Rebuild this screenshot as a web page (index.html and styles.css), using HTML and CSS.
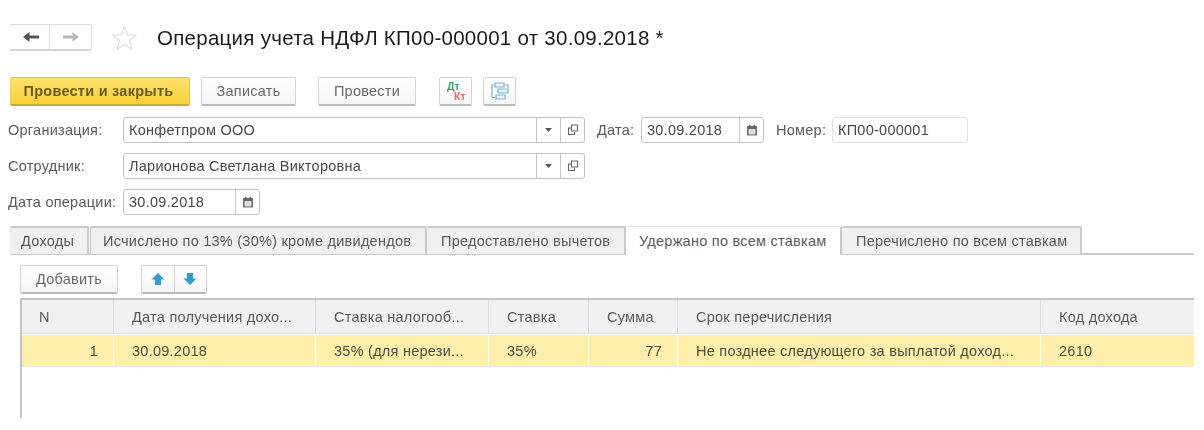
FILE: index.html
```html
<!DOCTYPE html>
<html lang="ru">
<head>
<meta charset="utf-8">
<title>Операция учета НДФЛ</title>
<link rel="stylesheet" href="styles.css">
</head>
<body>
<div class="page">
  <header class="head">
    <div class="nav">
      <span class="nav-cell nav-back"><svg width="18" height="12" viewBox="0 0 18 12"><path d="M1 6 7.500 1V4.600H17V7.400H7.500V11z" fill="#555"/></svg></span>
      <span class="nav-cell nav-fwd"><svg width="18" height="12" viewBox="0 0 18 12"><path d="M17 6 10.500 1V4.600H1V7.400h9.500V11z" fill="#b8b8b8"/></svg></span>
    </div>
    <svg class="star" width="27" height="26" viewBox="0 0 27 26"><path d="M13.500 1.500 16.700 10H25.500L18.500 15.500 21 24.500 13.500 19.300 6 24.500 8.500 15.500 1.500 10H10.300z" fill="#fff" stroke="#dedede" stroke-width="1.100" stroke-linejoin="round"/></svg>
    <h1 class="title">Операция учета НДФЛ КП00-000001 от 30.09.2018 *</h1>
  </header>

  <div class="toolbar">
    <button class="btn btn-primary">Провести и закрыть</button>
    <button class="btn btn-write">Записать</button>
    <button class="btn btn-post">Провести</button>
    <button class="btn btn-icon btn-dtkt"><span class="dt">Дт</span><span class="kt">Кт</span></button>
    <button class="btn btn-icon btn-struct"><svg width="18" height="18" viewBox="0 0 18 18" fill="none" stroke="#7fb0d6" stroke-width="1.200"><path d="M4 1h9v4H4zM7 7h10v4H7zM5 13h9v4H5z" fill="#e8f2fa"/><path d="M3 3H1v12.500h3M13.500 3H17v3"/></svg></button>
  </div>

  <div class="form-row">
    <label class="lbl">Организация:</label>
    <div class="field field-ref"><span class="val">Конфетпром ООО</span><span class="cell"><svg width="7" height="4" viewBox="0 0 7 4"><path d="M0 0h7L3.500 4z" fill="#555"/></svg></span><span class="cell"><svg width="12" height="12" viewBox="0 0 12 12" fill="none" stroke="#666" stroke-width="1.100"><path d="M4.500 1h6v6h-6z"/><path d="M4 4H1.500v6.500h6V8"/></svg></span></div>
    <label class="lbl-date">Дата:</label>
    <div class="field field-date"><span class="val">30.09.2018</span><span class="cell cell-cal"><svg width="12" height="12" viewBox="0 0 12 12"><path d="M1 2h10v9.500H1z" fill="#666"/><path d="M2.500 5h7v5.500h-7z" fill="#ddd"/><path d="M3 .8h1.500v2.500H3zM7.500 .8H9v2.500H7.500z" fill="#666"/></svg></span></div>
    <label class="lbl-num">Номер:</label>
    <div class="field field-num"><span class="val">КП00-000001</span></div>
  </div>

  <div class="form-row">
    <label class="lbl">Сотрудник:</label>
    <div class="field field-ref"><span class="val">Ларионова Светлана Викторовна</span><span class="cell"><svg width="7" height="4" viewBox="0 0 7 4"><path d="M0 0h7L3.500 4z" fill="#555"/></svg></span><span class="cell"><svg width="12" height="12" viewBox="0 0 12 12" fill="none" stroke="#666" stroke-width="1.100"><path d="M4.500 1h6v6h-6z"/><path d="M4 4H1.500v6.500h6V8"/></svg></span></div>
  </div>

  <div class="form-row">
    <label class="lbl">Дата операции:</label>
    <div class="field field-opdate"><span class="val">30.09.2018</span><span class="cell cell-cal"><svg width="12" height="12" viewBox="0 0 12 12"><path d="M1 2h10v9.500H1z" fill="#666"/><path d="M2.500 5h7v5.500h-7z" fill="#ddd"/><path d="M3 .8h1.500v2.500H3zM7.500 .8H9v2.500H7.500z" fill="#666"/></svg></span></div>
  </div>

  <nav class="tabs">
    <span class="tab tab-1">Доходы</span>
    <span class="tab tab-2">Исчислено по 13% (30%) кроме дивидендов</span>
    <span class="tab tab-3">Предоставлено вычетов</span>
    <span class="tab tab-4 tab-active">Удержано по всем ставкам</span>
    <span class="tab tab-5">Перечислено по всем ставкам</span>
  </nav>

  <div class="table-bar">
    <button class="btn btn-add">Добавить</button>
    <div class="updown">
      <span class="ud-cell"><svg width="14" height="14" viewBox="0 0 14 14"><path d="M7 1 13.500 7.500H10V13H4V7.500H.5z" fill="#2f9ad6"/></svg></span>
      <span class="ud-cell"><svg width="14" height="14" viewBox="0 0 14 14"><path d="M7 13 13.500 6.500H10V1H4v5.500H.5z" fill="#2f9ad6"/></svg></span>
    </div>
  </div>

  <div class="grid">
    <div class="row row-head">
      <span class="c c-n">N</span>
      <span class="c">Дата получения дохо...</span>
      <span class="c">Ставка налогооб...</span>
      <span class="c">Ставка</span>
      <span class="c">Сумма</span>
      <span class="c">Срок перечисления</span>
      <span class="c">Код дохода</span>
    </div>
    <div class="row row-data">
      <span class="c c-right">1</span>
      <span class="c">30.09.2018</span>
      <span class="c">35% (для нерези...</span>
      <span class="c">35%</span>
      <span class="c c-right">77</span>
      <span class="c">Не позднее следующего за выплатой доход...</span>
      <span class="c">2610</span>
    </div>
  </div>
</div>
</body>
</html>
```
FILE: styles.css
```css
* { box-sizing: border-box; }
html, body { margin: 0; background: #fff; }
body {
  font-family: "Liberation Sans", Arial, sans-serif;
  font-size: 14.500px;
  letter-spacing: .25px;
  color: #5a5a5a;
  width: 1204px;
  height: 430px;
  overflow: hidden;
}
.page { padding: 24px 10px 0 8px; filter: blur(0.45px); }

.head { display: flex; align-items: center; height: 27px; margin-left: 2px; }
.nav {
  display: flex; width: 82px; height: 27px;
  border: 1px solid #dcdcdc; border-left: 0; border-radius: 0 3px 3px 0;
  border-bottom: 2px solid #d4d4d4;
}
.nav-cell { display: flex; align-items: center; justify-content: center; }
.nav-back { width: 40px; padding-left: 2px; border-right: 1px solid #e0e0e0; }
.nav-fwd { flex: 1; }
.star { margin-left: 19px; flex: none; }
.title {
  margin: 0 0 0 19px;
  font-size: 20.500px; font-weight: 400; letter-spacing: .27px; color: #1a1a1a;
  white-space: nowrap;
}

.btn {
  font: inherit; letter-spacing: inherit; color: #6a6a6a; background: linear-gradient(#fff, #f6f6f6);
  border: 1px solid #d4d4d4; border-bottom: 2px solid #bbb; border-radius: 2px;
  height: 29px; padding: 0; display: flex; align-items: center; justify-content: center;
}
.toolbar { display: flex; margin: 26px 0 0 2px; height: 29px; }
.btn-primary {
  width: 180px; font-weight: 700; color: #6a5c1e; padding-right: 2px;
  background: linear-gradient(#fde26c, #fbcf3a);
  border: 1px solid #e9c043; border-left: 0; border-bottom: 2px solid #cfa935;
}
.btn-write { width: 95px; margin-left: 11px; }
.btn-post { width: 98px; margin-left: 22px; }
.btn-icon { width: 33px; }
.btn-dtkt {
  margin-left: 23px; flex-direction: column; align-items: flex-start;
  font-weight: 700; font-size: 10.500px; line-height: 10px; letter-spacing: 0; padding-left: 7px;
}
.dt { color: #3fa565; }
.kt { color: #f06666; margin-left: 7px; }
.btn-struct { margin-left: 11px; }

.form-row { display: flex; align-items: center; height: 26px; margin-top: 10px; }
.toolbar + .form-row { margin-top: 11px; }
.lbl { width: 115px; white-space: nowrap; flex: none; }
.field {
  display: flex; align-items: stretch; height: 26px;
  border: 1px solid #c2c2c2; border-radius: 3px; background: #fff; color: #484848;
}
.val { flex: 1; padding-left: 5px; line-height: 24px; white-space: nowrap; overflow: hidden; }
.cell { width: 24px; display: flex; align-items: center; justify-content: center; border-left: 1px solid #c9c9c9; }
.field-ref { width: 462px; }
.field-date { width: 123px; }
.field-opdate { width: 137px; }
.field-num { width: 136px; border-color: #e0e0e0; }
.lbl-date { margin-left: 12px; width: 44px; }
.lbl-num { margin-left: 12px; width: 56px; }

.tabs { display: flex; height: 30px; margin: 10px 0 0 2px; padding-top: 1px; border-bottom: 2px solid #c8c8c8; }
.tab {
  height: 28px; display: flex; align-items: center; background: #f0f0f0;
  border: 2px solid #cacaca; border-bottom: 0; border-left: 0; border-radius: 2px 2px 0 0;
  white-space: nowrap;
}
.tab-1 { width: 79px; padding-left: 11px; }
.tab-2 { width: 337px; padding-left: 12px; margin-left: 1px; border-left: 1px solid #cacaca; }
.tab-3 { width: 199px; padding-left: 14px; }
.tab-4 { width: 216px; padding-left: 13px; }
.tab-5 { width: 240px; padding-left: 14px; }
.tab-active { background: #fff; height: 29px; border-top: 1px solid #e8e8e8; border-right: 2px solid #c8c8c8; position: relative; z-index: 1; }

.table-bar { display: flex; margin: 10px 0 0 12px; height: 29px; }
.btn-add { width: 98px; height: 29px; }
.updown {
  display: flex; width: 66px; height: 29px; margin-left: 23px;
  border: 1px solid #d4d4d4; border-bottom: 2px solid #bbb; border-radius: 2px;
  background: linear-gradient(#fff, #f6f6f6);
}
.ud-cell { flex: 1; display: flex; align-items: center; justify-content: center; }
.ud-cell + .ud-cell { border-left: 1px solid #d4d4d4; }

.grid {
  margin: 4px 0 0 12px; width: 1174px; height: 120px;
  border-top: 2px solid #c4c4c4; border-left: 2px solid #c4c4c4;
}
.row { display: grid; grid-template-columns: 92px 202px 173px 100px 89px 363px 153px; }
.row-head { height: 34px; background: #f1f1f1; border-bottom: 1px solid #dedede; }
.row-data { height: 32px; background: #fdeea9; border-bottom: 1px solid #e8e8e8; margin-top: 1px; color: #4c4c4c; }
.c { display: flex; align-items: center; padding-left: 18px; border-right: 1px solid #fff; white-space: nowrap; overflow: hidden; }
.row-head .c { border-right: 1px solid #dcdcdc; }
.row-head .c:last-child, .row-data .c:last-child { border-right: 0; }
.c-n { padding-left: 17px; }
.c-right { justify-content: flex-end; padding: 0 15px 0 0; }
```
